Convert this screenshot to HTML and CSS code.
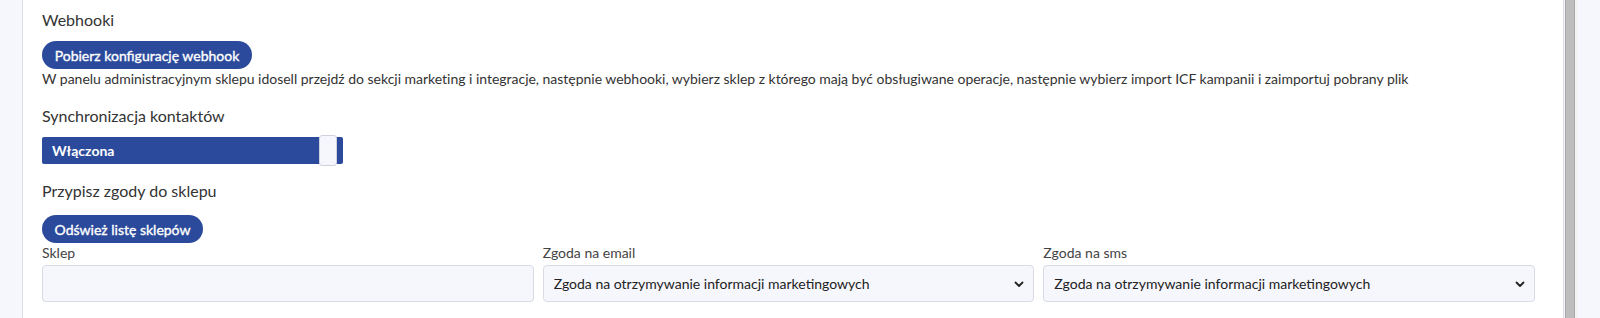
FILE: index.html
```html
<!DOCTYPE html>
<html lang="pl">
<head>
  <meta charset="UTF-8">
  <title>Integracja idosell</title>
  <link rel="stylesheet" href="styles.css">
</head>
<body>
  <div class="page">
    <div class="side"></div>
    <div class="card">
      <h3 class="section">Webhooki</h3>
      <button class="btn btn-webhook">Pobierz konfigurację webhook</button>
      <p class="hint">W panelu administracyjnym sklepu idosell przejdź do sekcji marketing i integracje, następnie webhooki, wybierz sklep z którego mają być obsługiwane operacje, następnie wybierz import ICF kampanii i zaimportuj pobrany plik</p>

      <h3 class="section section-gap">Synchronizacja kontaktów</h3>
      <div class="toggle">
        <span class="toggle-label">Włączona</span>
        <span class="toggle-knob"></span>
      </div>

      <h3 class="section section-gap">Przypisz zgody do sklepu</h3>
      <button class="btn btn-refresh">Odśwież listę sklepów</button>

      <div class="fields">
        <div class="field">
          <label>Sklep</label>
          <input type="text" class="control">
        </div>
        <div class="field">
          <label>Zgoda na email</label>
          <div class="select-wrap">
            <select class="control">
              <option>Zgoda na otrzymywanie informacji marketingowych</option>
            </select>
            <svg class="chevron" width="10" height="8" viewBox="0 0 10 8"><path d="M1.5 2.5 L5 6 L8.5 2.5" fill="none" stroke="#222" stroke-width="1.8" stroke-linecap="round" stroke-linejoin="round"/></svg>
          </div>
        </div>
        <div class="field">
          <label>Zgoda na sms</label>
          <div class="select-wrap">
            <select class="control">
              <option>Zgoda na otrzymywanie informacji marketingowych</option>
            </select>
            <svg class="chevron" width="10" height="8" viewBox="0 0 10 8"><path d="M1.5 2.5 L5 6 L8.5 2.5" fill="none" stroke="#222" stroke-width="1.8" stroke-linecap="round" stroke-linejoin="round"/></svg>
          </div>
        </div>
      </div>
    </div>
    <div class="scrollbar"><div class="thumb"></div></div>
    <div class="gutter"></div>
  </div>
</body>
</html>
```

FILE: styles.css
```css
body { margin: 0; background: #f6f7fc; font-family: Lato, "Open Sans", sans-serif; color: #333; }
.page { display: flex; height: 318px; overflow: hidden; }
.side { width: 22px; }
.card { flex: 1; background: #fff; border-left: 1px solid #dcdde8; border-right: 1px solid #dcdde8; padding: 8px 28px 0 19px; }
.scrollbar { width: 12px; background: #f3f3f3; display: flex; justify-content: center; padding: 0 2px 0 0; }
.thumb { width: 8px; background: #bdbdbd; border-left: 1px solid #a9a9a9; border-right: 1px solid #a9a9a9; }
.gutter { width: 22px; }

.section { margin: 0; font-size: 16px; line-height: 24px; font-weight: normal; color: #333; }
.section-gap { margin-top: 15px; }

.btn { display: block; height: 28px; padding: 0; border: 0; border-radius: 14px; background: #2b4a9b; color: #fff; font-family: inherit; font-size: 14px; font-weight: normal; -webkit-text-stroke: 0.35px #fff; white-space: nowrap; text-align: center; }
.btn-webhook { margin-top: 9px; width: 210px; }
.btn-refresh { margin-top: 12px; width: 161px; }

.hint { margin: 0; font-size: 14px; line-height: 20px; color: #333; letter-spacing: -0.02px; }

.toggle { position: relative; margin-top: 9px; width: 301px; height: 27px; background: #2b4a9b; border-radius: 2px; display: flex; align-items: center; }
.toggle-label { color: #fff; font-size: 14px; font-weight: bold; padding-left: 10px; }
.toggle-knob { position: absolute; left: 277px; top: -2px; width: 16px; height: 29px; background: #f6f7fd; border: 1px solid #cfd2de; border-radius: 3px; }

.fields { display: grid; grid-template-columns: repeat(3, 1fr); gap: 9px; }
.field label { display: block; font-size: 14px; line-height: 20px; color: #444; margin-bottom: 2px; }
.control { box-sizing: border-box; width: 100%; height: 37px; padding: 0 10px; background: #f6f7fd; border: 1px solid #d8dae6; border-radius: 4px; font-family: inherit; font-size: 14px; color: #222; appearance: none; }
.select-wrap { position: relative; }
.chevron { position: absolute; right: 10px; top: 15px; pointer-events: none; }
```
